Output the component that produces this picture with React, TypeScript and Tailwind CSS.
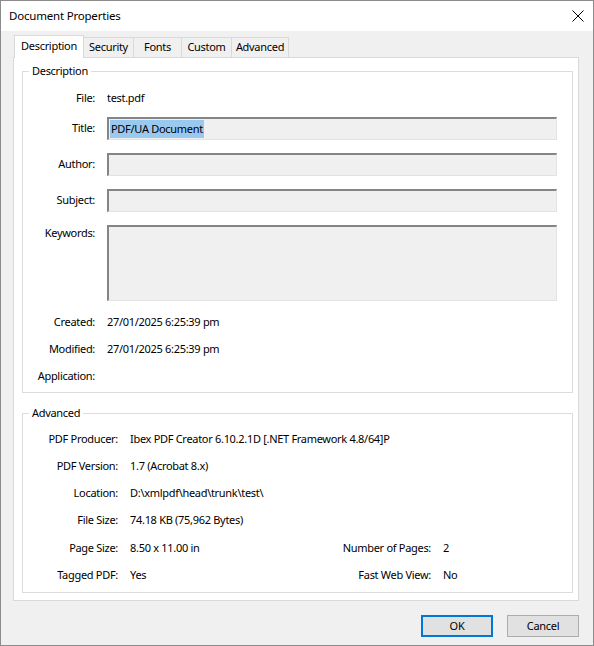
import React from "react";

const font = { fontFamily: '"Segoe UI", "Noto Sans", "Open Sans", sans-serif' };

const tabs = [
  { label: "Description", w: "w-[70px]", active: true },
  { label: "Security", w: "w-[50px]" },
  { label: "Fonts", w: "w-[48px]" },
  { label: "Custom", w: "w-[50px]" },
  { label: "Advanced", w: "w-[57px]" },
];

function Field({ className = "", children }: { className?: string; children?: React.ReactNode }) {
  return (
    <div
      className={
        "flex-1 bg-[#f0f0f0] border-t-2 border-l-2 border-r border-b border-t-[#858585] border-l-[#858585] border-r-[#e3e3e3] border-b-[#e3e3e3] " +
        className
      }
    >
      {children}
    </div>
  );
}

function Group({ title, className = "", children }: { title: string; className?: string; children: React.ReactNode }) {
  return (
    <div className={"relative border border-[#dcdcdc] " + className}>
      <span className="absolute -top-[9px] left-[6px] bg-white px-[3px] leading-[16px]">{title}</span>
      {children}
    </div>
  );
}

function Row({ label, value, lw = "w-[72px]", className = "" }: { label: string; value?: string; lw?: string; className?: string }) {
  return (
    <div className={"flex items-center h-[20px] gap-[12px] " + className}>
      <div className={lw + " text-right"}>{label}</div>
      <div>{value}</div>
    </div>
  );
}

export default function App() {
  return (
    <div
      style={font}
      className="w-[594px] h-[646px] border border-[#8c8c8c] bg-[#f0f0f0] text-[11px] tracking-[-0.3px] text-black flex flex-col overflow-hidden"
    >
      {/* title bar */}
      <div className="h-[30px] bg-white flex items-center justify-between pl-[8px] pr-[9px]">
        <span className="text-[11.5px] tracking-[-0.2px]">Document Properties</span>
        <svg width="12" height="12" viewBox="0 0 12 12" className="text-black">
          <path d="M0.5 0.5 L11.5 11.5 M11.5 0.5 L0.5 11.5" stroke="currentColor" strokeWidth="1" fill="none" />
        </svg>
      </div>

      <div className="flex-1 flex flex-col pt-[4px] pl-[12px] pr-[14px]">
        {/* tabs */}
        <div className="flex items-end pl-[1px] h-[23px] relative z-10 -mb-[1px]">
          {tabs.map((t) =>
            t.active ? (
              <div
                key={t.label}
                className={t.w + " h-[23px] bg-white border-l border-t border-r border-[#d9d9d9] flex items-center justify-center pb-[1px]"}
              >
                {t.label}
              </div>
            ) : (
              <div
                key={t.label}
                className={t.w + " h-[20px] mb-[1px] border-t border-r border-[#d9d9d9] flex items-center justify-center"}
              >
                {t.label}
              </div>
            )
          )}
        </div>

        {/* panel */}
        <div className="h-[544px] bg-white border border-[#d9d9d9] pt-[13px] pl-[8px] pr-[5px]">
          <Group title="Description" className="h-[322px] pt-[16px] pr-[15px]">
            <Row label="File:" value="test.pdf" />
            <div className="flex items-center gap-[12px] mt-[9px] h-[23px]">
              <div className="w-[72px] text-right">Title:</div>
              <Field className="h-[23px] flex items-center pl-[1px]">
                <span className="bg-[#99c9ef] px-[1px] leading-[18px]">PDF/UA Document</span>
              </Field>
            </div>
            <div className="flex items-center gap-[12px] mt-[13px] h-[23px]">
              <div className="w-[72px] text-right">Author:</div>
              <Field className="h-[23px]" />
            </div>
            <div className="flex items-center gap-[12px] mt-[13px] h-[23px]">
              <div className="w-[72px] text-right">Subject:</div>
              <Field className="h-[23px]" />
            </div>
            <div className="flex items-start gap-[12px] mt-[13px] h-[76px]">
              <div className="w-[72px] text-right leading-[16px]">Keywords:</div>
              <Field className="h-[76px]" />
            </div>
            <Row label="Created:" value="27/01/2025 6:25:39 pm" className="mt-[11px]" />
            <Row label="Modified:" value="27/01/2025 6:25:39 pm" className="mt-[7px]" />
            <Row label="Application:" className="mt-[7px]" />
          </Group>

          <Group title="Advanced" className="mt-[20px] h-[180px] pt-[15px]">
            <Row lw="w-[95px]" label="PDF Producer:" value="Ibex PDF Creator 6.10.2.1D [.NET Framework 4.8/64]P" />
            <Row lw="w-[95px]" label="PDF Version:" value="1.7 (Acrobat 8.x)" className="mt-[7px]" />
            <Row lw="w-[95px]" label="Location:" value="D:\xmlpdf\head\trunk\test\" className="mt-[7px]" />
            <Row lw="w-[95px]" label="File Size:" value="74.18 KB (75,962 Bytes)" className="mt-[7px]" />
            <div className="flex items-center h-[20px] mt-[8px]">
              <Row lw="w-[95px]" label="Page Size:" value="8.50 x 11.00 in" className="w-[297px]" />
              <div className="w-[111px] text-right">Number of Pages:</div>
              <div className="ml-[12px]">2</div>
            </div>
            <div className="flex items-center h-[20px] mt-[7px]">
              <Row lw="w-[95px]" label="Tagged PDF:" value="Yes" className="w-[297px]" />
              <div className="w-[111px] text-right">Fast Web View:</div>
              <div className="ml-[12px]">No</div>
            </div>
          </Group>
        </div>

        {/* buttons */}
        <div className="flex justify-end gap-[14px] mt-[14px]">
          <button className="w-[72px] h-[22px] bg-[#e1e1e1] border-2 border-[#0078d7] flex items-center justify-center">
            OK
          </button>
          <button className="w-[72px] h-[22px] bg-[#e1e1e1] border border-[#adadad] flex items-center justify-center">
            Cancel
          </button>
        </div>
      </div>
    </div>
  );
}
